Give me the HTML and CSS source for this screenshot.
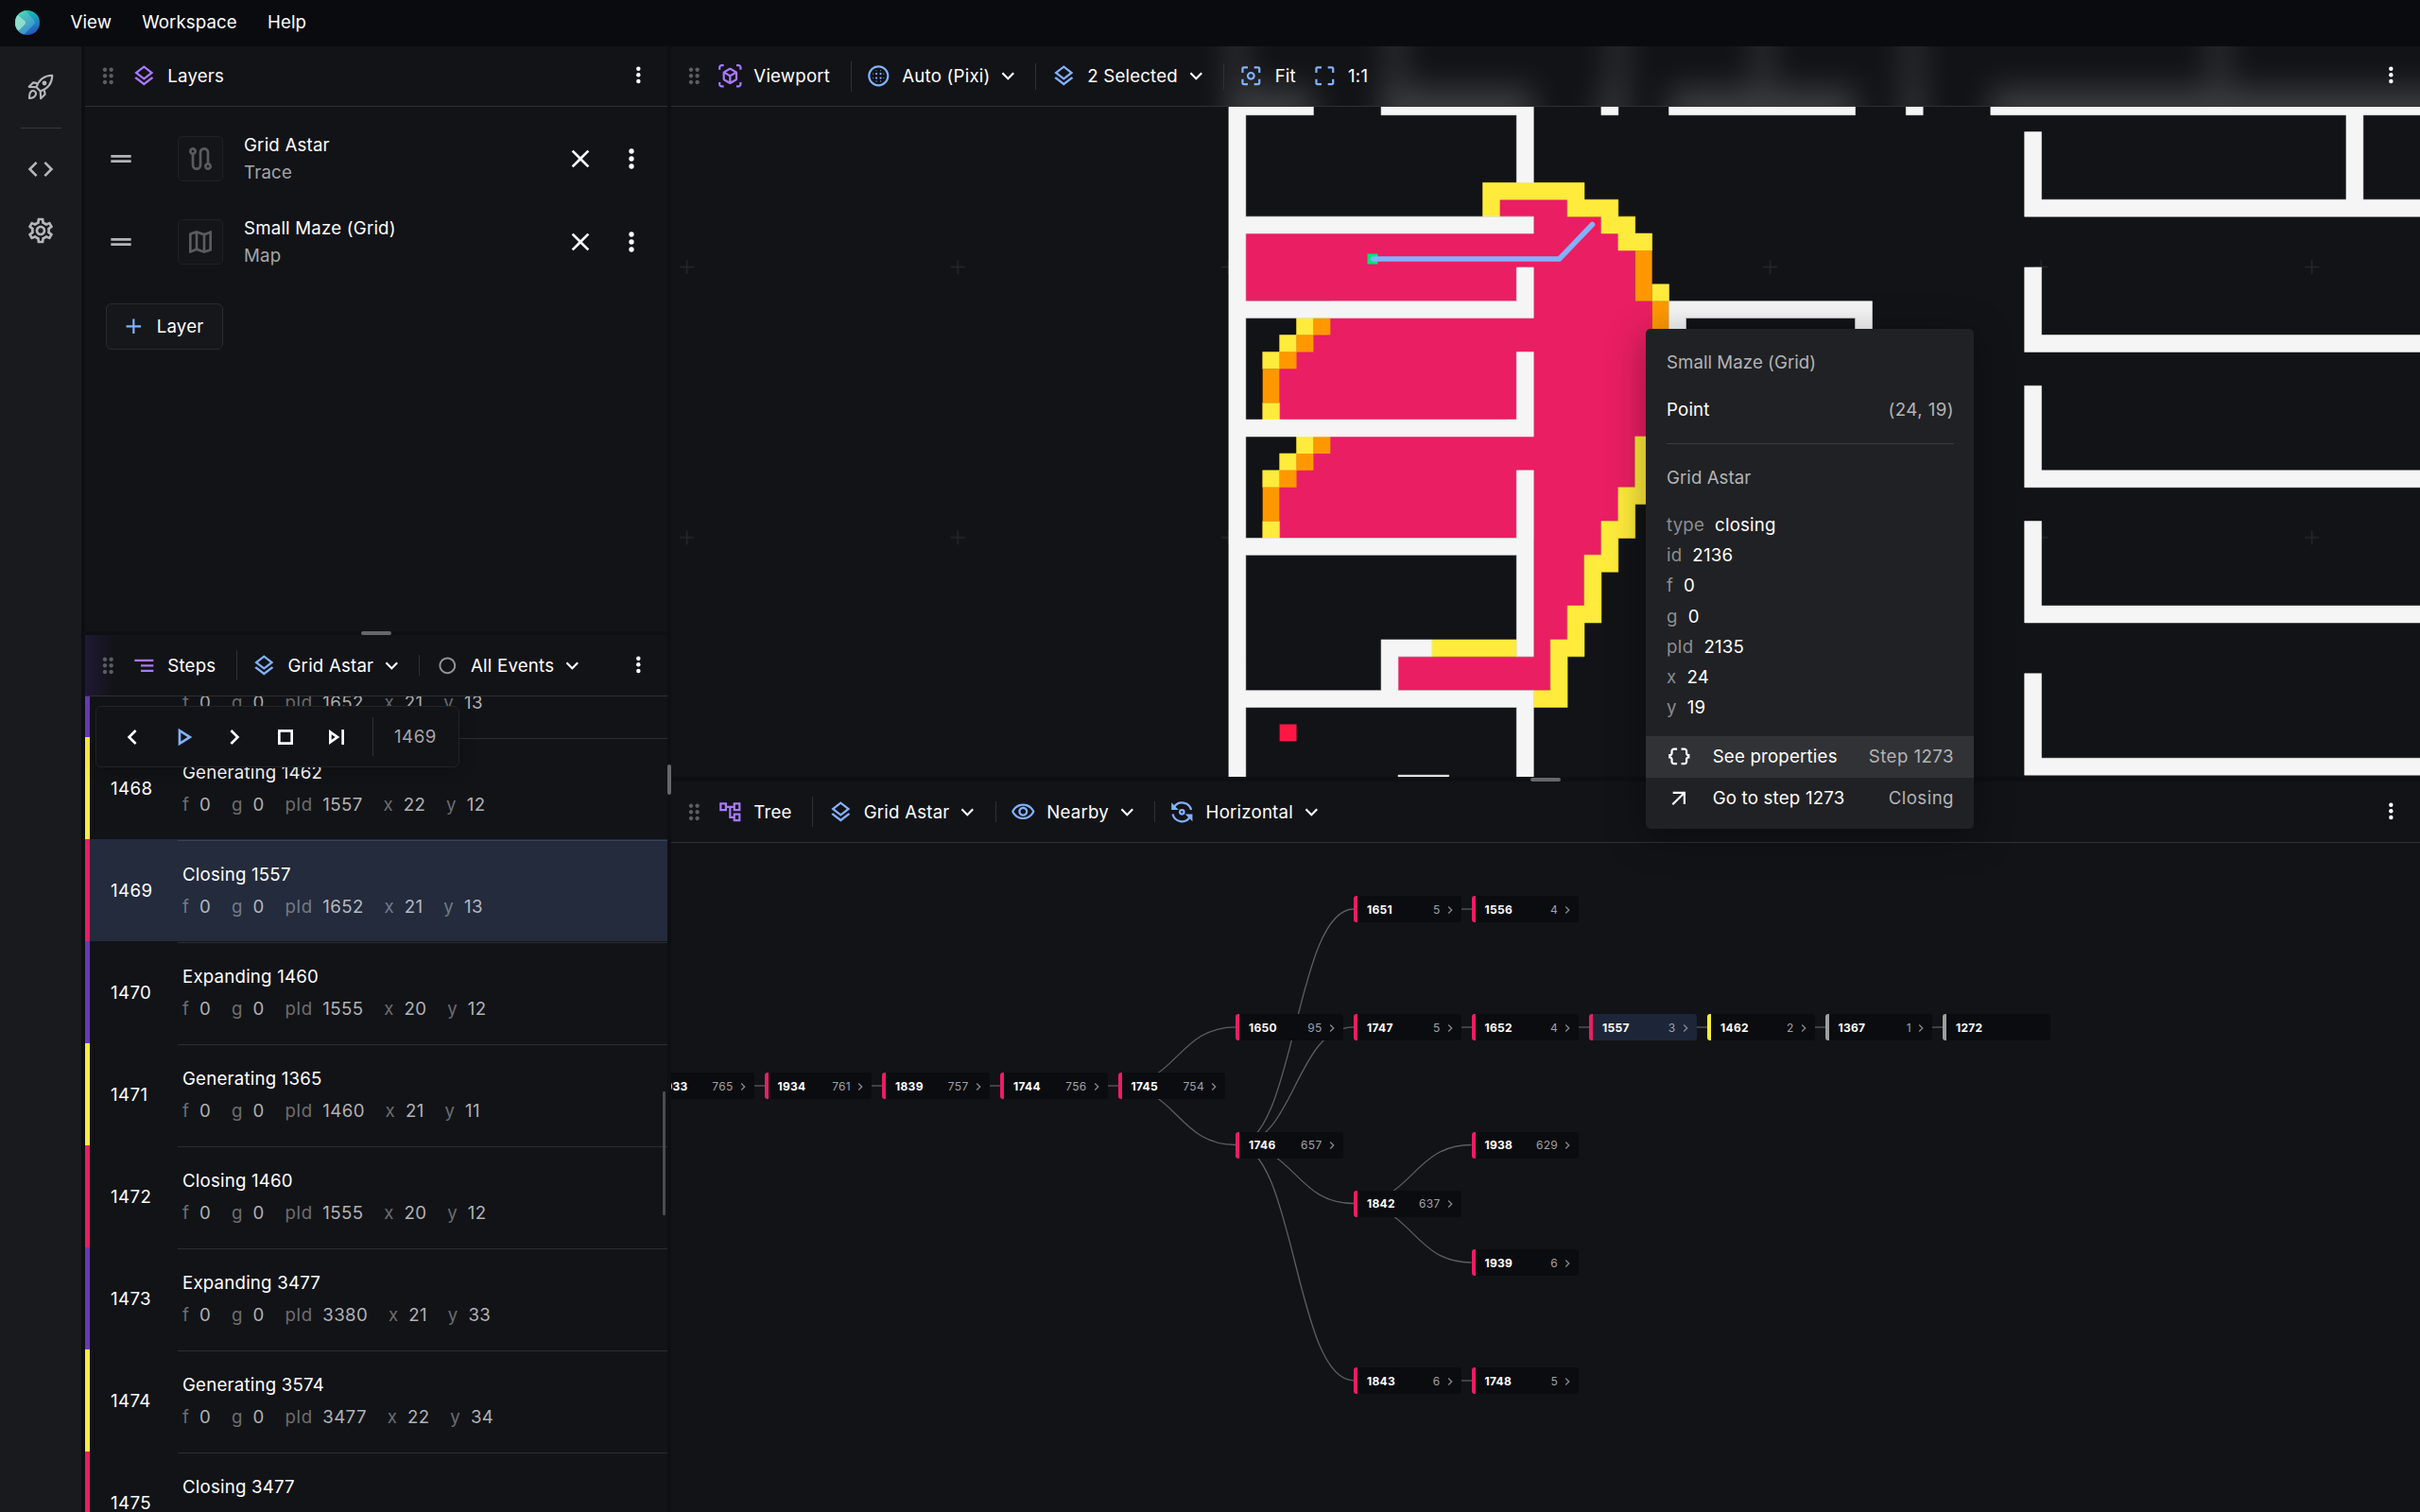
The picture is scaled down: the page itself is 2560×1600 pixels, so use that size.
FILE: index.html
```html
<!DOCTYPE html>
<html lang="en">
<head>
<meta charset="utf-8">
<title>Visualiser</title>
<link rel="stylesheet" href="styles.css">
</head>
<body>
<svg class="defs" width="0" height="0" aria-hidden="true">
  <symbol id="i-drag" viewBox="0 0 24 24"><path d="M11 18c0 1.100-.9 2-2 2s-2-.9-2-2 .9-2 2-2 2 .9 2 2m-2-8c-1.100 0-2 .9-2 2s.9 2 2 2 2-.9 2-2-.9-2-2-2m0-6c-1.100 0-2 .9-2 2s.9 2 2 2 2-.9 2-2-.9-2-2-2m6 4c1.100 0 2-.9 2-2s-.9-2-2-2-2 .9-2 2 .9 2 2 2m0 2c-1.100 0-2 .9-2 2s.9 2 2 2 2-.9 2-2-.9-2-2-2m0 6c-1.100 0-2 .9-2 2s.9 2 2 2 2-.9 2-2-.9-2-2-2"/></symbol>
  <symbol id="i-more" viewBox="0 0 24 24"><circle cx="12" cy="6" r="2"/><circle cx="12" cy="12" r="2"/><circle cx="12" cy="18" r="2"/></symbol>
  <symbol id="i-layers" viewBox="0 0 24 24"><path d="m11.990 18.540-7.370-5.730L3 14.070l9 7 9-7-1.630-1.270zM12 16l7.360-5.730L21 9l-9-7-9 7 1.630 1.270zm0-11.470L17.740 9 12 13.470 6.260 9z"/></symbol>
  <symbol id="i-handle" viewBox="0 0 24 24"><path d="M20 9H4v2h16zM4 15h16v-2H4z"/></symbol>
  <symbol id="i-route" viewBox="0 0 24 24"><path d="M19 15.180V7c0-2.210-1.790-4-4-4s-4 1.790-4 4v10c0 1.100-.9 2-2 2s-2-.9-2-2V8.820C8.160 8.400 9 7.300 9 6c0-1.660-1.340-3-3-3S3 4.340 3 6c0 1.300.84 2.400 2 2.820V17c0 2.210 1.790 4 4 4s4-1.790 4-4V7c0-1.100.9-2 2-2s2 .9 2 2v8.180c-1.160.41-2 1.510-2 2.820 0 1.660 1.340 3 3 3s3-1.340 3-3c0-1.300-.84-2.400-2-2.820M6 7c-.55 0-1-.45-1-1s.45-1 1-1 1 .45 1 1-.45 1-1 1m12 12c-.55 0-1-.45-1-1s.45-1 1-1 1 .45 1 1-.45 1-1 1"/></symbol>
  <symbol id="i-map" viewBox="0 0 24 24"><path d="m20.500 3-.16.030L15 5.100 9 3 3.360 4.900c-.21.070-.36.250-.36.480V20.500c0 .28.220.5.500.5l.16-.030L9 18.900l6 2.100 5.640-1.900c.21-.070.360-.25.360-.48V3.500c0-.28-.22-.5-.5-.5M10 5.470l4 1.400v11.660l-4-1.400zm-5 .99 3-1.010v11.700l-3 1.160zm14 11.080-3 1.010V6.860l3-1.160z"/></symbol>
  <symbol id="i-close" viewBox="0 0 24 24"><path d="M19 6.410 17.590 5 12 10.590 6.410 5 5 6.410 10.590 12 5 17.590 6.410 19 12 13.410 17.590 19 19 17.590 13.410 12z"/></symbol>
  <symbol id="i-plus" viewBox="0 0 24 24"><path d="M19 13h-6v6h-2v-6H5v-2h6V5h2v6h6z"/></symbol>
  <symbol id="i-steps" viewBox="0 0 24 24"><path d="M9 18h12v-2H9zM3 6v2h18V6zm6 7h12v-2H9z"/></symbol>
  <symbol id="i-down" viewBox="0 0 24 24"><path d="M7.410 8.590 12 13.170l4.590-4.580L18 10l-6 6-6-6z"/></symbol>
  <symbol id="i-circle" viewBox="0 0 24 24"><path d="M12 4C7.580 4 4 7.580 4 12s3.580 8 8 8 8-3.580 8-8-3.580-8-8-8m0 14.200c-3.430 0-6.200-2.770-6.200-6.200s2.770-6.200 6.200-6.200 6.200 2.770 6.200 6.200-2.770 6.200-6.200 6.200"/></symbol>
  <symbol id="i-prev" viewBox="0 0 24 24"><path d="M15.410 7.410 14 6l-6 6 6 6 1.410-1.410L10.830 12z"/></symbol>
  <symbol id="i-next" viewBox="0 0 24 24"><path d="M10 6 8.590 7.410 13.170 12l-4.580 4.590L10 18l6-6z"/></symbol>
  <symbol id="i-play" viewBox="0 0 24 24"><path d="M10 8.640 15.270 12 10 15.360zM8 5v14l11-7z"/></symbol>
  <symbol id="i-stop" viewBox="0 0 24 24"><path d="M16 8v8H8V8zm2-2H6v12h12z"/></symbol>
  <symbol id="i-skip" viewBox="0 0 24 24"><path d="m6 18 8.500-6L6 6zm2-8.140L11.030 12 8 14.140zM16 6h2v12h-2z"/></symbol>
  <symbol id="i-view" viewBox="0 0 24 24"><path d="M3 4c0-.55.45-1 1-1h2V1H4C2.340 1 1 2.340 1 4v2h2zm0 16v-2H1v2c0 1.660 1.340 3 3 3h2v-2H4c-.55 0-1-.45-1-1M20 1h-2v2h2c.55 0 1 .45 1 1v2h2V4c0-1.660-1.340-3-3-3m1 19c0 .55-.45 1-1 1h-2v2h2c1.660 0 3-1.340 3-3v-2h-2zm-2-5.130V9.130c0-.72-.38-1.380-1-1.730l-5-2.880c-.31-.18-.65-.27-1-.27s-.69.090-1 .27L6 7.390c-.62.360-1 1.020-1 1.740v5.740c0 .72.380 1.380 1 1.730l5 2.880c.31.180.65.270 1 .27s.69-.090 1-.27l5-2.880c.62-.35 1-1.010 1-1.730m-8 2.300-4-2.300v-4.630l4 2.330zm1-6.330L8.040 8.530 12 6.250l3.960 2.280zm5 4.030-4 2.300v-4.600l4-2.330z"/></symbol>
  <symbol id="i-blur" viewBox="0 0 24 24"><path d="M12 2C6.480 2 2 6.480 2 12s4.480 10 10 10 10-4.480 10-10S17.520 2 12 2m0 18c-4.420 0-8-3.580-8-8s3.580-8 8-8 8 3.580 8 8-3.580 8-8 8"/><circle cx="10" cy="10" r="1"/><circle cx="14" cy="10" r="1"/><circle cx="10" cy="14" r="1"/><circle cx="14" cy="14" r="1"/><circle cx="7" cy="10" r=".5"/><circle cx="7" cy="14" r=".5"/><circle cx="17" cy="10" r=".5"/><circle cx="17" cy="14" r=".5"/><circle cx="10" cy="7" r=".5"/><circle cx="14" cy="7" r=".5"/><circle cx="10" cy="17" r=".5"/><circle cx="14" cy="17" r=".5"/></symbol>
  <symbol id="i-fit" viewBox="0 0 24 24"><path d="M12 8c-2.210 0-4 1.790-4 4s1.790 4 4 4 4-1.790 4-4-1.790-4-4-4m0 6c-1.100 0-2-.9-2-2s.9-2 2-2 2 .9 2 2-.9 2-2 2m-7 1H3v4c0 1.100.9 2 2 2h4v-2H5zM5 5h4V3H5c-1.100 0-2 .9-2 2v4h2zm14-2h-4v2h4v4h2V5c0-1.100-.9-2-2-2m0 16h-4v2h4c1.100 0 2-.9 2-2v-4h-2z"/></symbol>
  <symbol id="i-full" viewBox="0 0 24 24"><path d="M3 5v4h2V5h4V3H5c-1.100 0-2 .9-2 2m2 10H3v4c0 1.100.9 2 2 2h4v-2H5zm14 4h-4v2h4c1.100 0 2-.9 2-2v-4h-2zm0-16h-4v2h4v4h2V5c0-1.100-.9-2-2-2"/></symbol>
  <symbol id="i-tree" viewBox="0 0 24 24"><path d="M22 11V3h-7v3H9V3H2v8h7V8h2v10h4v3h7v-8h-7v3h-2V8h2v3zM7 9H4V5h3zm10 6h3v4h-3zm0-10h3v4h-3z"/></symbol>
  <symbol id="i-eye" viewBox="0 0 24 24"><path d="M12 6c3.790 0 7.170 2.130 8.820 5.500C19.170 14.870 15.790 17 12 17s-7.170-2.130-8.820-5.500C4.830 8.130 8.210 6 12 6m0-2C7 4 2.730 7.110 1 11.500 2.730 15.890 7 19 12 19s9.270-3.110 11-7.500C21.270 7.110 17 4 12 4m0 5c1.380 0 2.500 1.120 2.500 2.500S13.380 14 12 14s-2.500-1.120-2.500-2.500S10.620 9 12 9m0-2c-2.480 0-4.500 2.020-4.500 4.500S9.520 16 12 16s4.500-2.020 4.500-4.500S14.480 7 12 7"/></symbol>
  <symbol id="i-rotate" viewBox="0 0 24 24"><g fill="none" stroke="currentColor" stroke-width="2"><path d="M20.800 10A9 9 0 0 0 4.600 7M3.200 14a9 9 0 0 0 16.200 3"/><circle cx="12" cy="12" r="2"/></g><path d="M2 3v7h7L6.500 7.600 4 5zM22 21v-7h-7l2.500 2.400L20 19z"/></symbol>
  <symbol id="i-rocket" viewBox="0 0 24 24"><g fill="none" stroke="currentColor" stroke-width="1.600" stroke-linejoin="round"><path d="M8.600 12.200C10.500 6.500 14.500 3 21.200 2.800 21 9.500 17.500 13.500 11.800 15.400z"/><path d="M9.400 9.100 6.200 8.500 2.800 11.900l5.800.3M14.900 14.600l.6 3.200-3.400 3.400-.3-5.800"/><path d="M3 21c0-2.600.3-4.300 1.300-5.300a2.300 2.300 0 0 1 3.300 0 2.300 2.300 0 0 1 0 3.300C6.600 20.700 5.600 21 3 21z"/></g><circle cx="15" cy="9" r="1.800"/></symbol>
  <symbol id="i-code" viewBox="0 0 24 24"><path d="M9.400 16.600 4.800 12l4.600-4.600L8 6l-6 6 6 6zm5.200 0 4.600-4.600-4.600-4.600L16 6l6 6-6 6z"/></symbol>
  <symbol id="i-gear" viewBox="0 0 24 24"><path d="M19.430 12.980c.04-.32.070-.64.070-.98s-.03-.66-.07-.98l2.110-1.650c.19-.15.240-.42.120-.64l-2-3.460c-.09-.16-.26-.25-.44-.25-.06 0-.12.010-.17.030l-2.490 1c-.52-.4-1.080-.73-1.690-.98l-.38-2.650C14.460 2.180 14.250 2 14 2h-4c-.25 0-.46.180-.49.420l-.38 2.650c-.61.250-1.170.590-1.690.98l-2.490-1c-.06-.02-.12-.03-.18-.03-.17 0-.34.090-.43.250l-2 3.460c-.13.220-.07.490.12.640l2.110 1.650c-.04.320-.07.650-.07.980s.03.660.07.980l-2.110 1.650c-.19.150-.24.420-.12.640l2 3.460c.09.160.26.250.44.250.06 0 .12-.01.170-.03l2.490-1c.52.400 1.080.730 1.690.98l.38 2.650c.03.240.24.420.49.420h4c.25 0 .46-.18.490-.42l.38-2.650c.61-.25 1.170-.59 1.690-.98l2.490 1c.06.020.12.030.18.030.17 0 .34-.09.430-.25l2-3.460c.12-.22.070-.49-.12-.64zm-1.980-1.710c.04.310.05.520.05.730s-.02.430-.05.730l-.14 1.130.89.700 1.080.84-.7 1.210-1.270-.51-1.040-.42-.9.680c-.43.320-.84.560-1.250.730l-1.060.43-.16 1.130-.2 1.350h-1.400l-.19-1.350-.16-1.130-1.060-.43c-.43-.18-.83-.41-1.230-.71l-.91-.7-1.060.43-1.270.51-.7-1.210 1.080-.84.890-.7-.14-1.130c-.03-.31-.05-.54-.05-.74s.02-.43.050-.73l.14-1.130-.89-.7-1.080-.84.700-1.210 1.270.51 1.040.42.900-.68c.43-.32.840-.56 1.250-.73l1.060-.43.160-1.130.2-1.350h1.390l.19 1.350.16 1.130 1.060.43c.43.180.83.410 1.230.71l.91.700 1.060-.43 1.270-.51.700 1.210-1.070.850-.89.700zM12 8c-2.210 0-4 1.790-4 4s1.790 4 4 4 4-1.790 4-4-1.790-4-4-4m0 6c-1.100 0-2-.9-2-2s.9-2 2-2 2 .9 2 2-.9 2-2 2"/></symbol>
  <symbol id="i-braces" viewBox="0 0 24 24"><path d="M4 7v2c0 .55-.45 1-1 1H2v4h1c.55 0 1 .45 1 1v2c0 1.650 1.350 3 3 3h3v-2H7c-.55 0-1-.45-1-1v-2c0-1.300-.84-2.420-2-2.830v-.34C5.160 11.420 6 10.300 6 9V7c0-.55.45-1 1-1h3V4H7C5.350 4 4 5.350 4 7M21 10c-.55 0-1-.45-1-1V7c0-1.650-1.350-3-3-3h-3v2h3c.55 0 1 .45 1 1v2c0 1.300.84 2.420 2 2.830v.34c-1.160.41-2 1.520-2 2.830v2c0 .55-.45 1-1 1h-3v2h3c1.650 0 3-1.350 3-3v-2c0-.55.45-1 1-1h1v-4z"/></symbol>
  <symbol id="i-out" viewBox="0 0 24 24"><path d="M6 6v2h8.590L5 17.590 6.410 19 16 9.410V18h2V6z"/></symbol>
</svg>

<div class="app">
  <header class="menubar">
    <svg class="logo" viewBox="0 0 26 26"><defs><linearGradient id="lg" x1="0.300" y1="0" x2="0.700" y2="1"><stop offset="0" stop-color="#1fc8a4"/><stop offset=".5" stop-color="#1398c8"/><stop offset="1" stop-color="#2a50b8"/></linearGradient><linearGradient id="lm" x1="0" y1="0" x2="0.500" y2="1"><stop offset="0" stop-color="#52dcb0"/><stop offset="1" stop-color="#3f8fd0"/></linearGradient><clipPath id="lc"><circle cx="13" cy="13" r="13"/></clipPath></defs><g clip-path="url(#lc)"><path fill="url(#lg)" d="M0 0h26v26H0z"/><path fill="url(#lm)" d="M0 0h11l9 10.500q1.500 2 0 4L9 26H0z"/><path fill="#8fdccb" d="M0 4l3 1 7.500 6.500q1.200 1.500 0 3L3 22l-3 2z"/></g></svg>
    <nav class="menu"><span>View</span><span>Workspace</span><span>Help</span></nav>
  </header>
  <div class="main">
    <aside class="sidebar">
      <svg class="ic lg"><use href="#i-rocket"/></svg>
      <hr>
      <svg class="ic lg"><use href="#i-code"/></svg>
      <svg class="ic lg gear"><use href="#i-gear"/></svg>
    </aside>

    <div class="left">
      <section class="panel layers">
        <div class="bar">
          <svg class="ic drag"><use href="#i-drag"/></svg>
          <div class="tool title"><svg class="ic purple"><use href="#i-layers"/></svg><span>Layers</span></div>
          <svg class="ic more"><use href="#i-more"/></svg>
        </div>
        <div class="layer-list">
          <div class="layer">
            <svg class="ic xl muted"><use href="#i-handle"/></svg>
            <div class="tile"><svg class="ic xl"><use href="#i-route"/></svg></div>
            <div class="layer-text"><span>Grid Astar</span><span class="sub">Trace</span></div>
            <svg class="ic xl"><use href="#i-close"/></svg>
            <svg class="ic xl last"><use href="#i-more"/></svg>
          </div>
          <div class="layer">
            <svg class="ic xl muted"><use href="#i-handle"/></svg>
            <div class="tile"><svg class="ic xl"><use href="#i-map"/></svg></div>
            <div class="layer-text"><span>Small Maze (Grid)</span><span class="sub">Map</span></div>
            <svg class="ic xl"><use href="#i-close"/></svg>
            <svg class="ic xl last"><use href="#i-more"/></svg>
          </div>
          <div class="add"><svg class="ic blue"><use href="#i-plus"/></svg><span>Layer</span></div>
        </div>
      </section>
      <div class="split-h"><i></i></div>
      <section class="panel steps">
        <div class="bar glow">
          <svg class="ic drag"><use href="#i-drag"/></svg>
          <div class="tool title"><svg class="ic purple"><use href="#i-steps"/></svg><span>Steps</span></div>
          <i class="div tall"></i>
          <div class="tool"><svg class="ic blue"><use href="#i-layers"/></svg><span>Grid Astar</span><svg class="ic"><use href="#i-down"/></svg></div>
          <i class="div"></i>
          <div class="tool"><svg class="ic gray"><use href="#i-circle"/></svg><span>All Events</span><svg class="ic"><use href="#i-down"/></svg></div>
          <svg class="ic more"><use href="#i-more"/></svg>
        </div>
        <div class="step-view">
          <div class="step-list">
            <div class="step first expanding"><b></b><div><p><i>f</i>0<i>g</i>0<i>pId</i>1652<i>x</i>21<i>y</i>13</p></div></div>
            <div class="step generating"><b>1468</b><div><span>Generating 1462</span><p><i>f</i>0<i>g</i>0<i>pId</i>1557<i>x</i>22<i>y</i>12</p></div></div>
            <div class="step closing selected"><b>1469</b><div><span>Closing 1557</span><p><i>f</i>0<i>g</i>0<i>pId</i>1652<i>x</i>21<i>y</i>13</p></div></div>
            <div class="step expanding"><b>1470</b><div><span>Expanding 1460</span><p><i>f</i>0<i>g</i>0<i>pId</i>1555<i>x</i>20<i>y</i>12</p></div></div>
            <div class="step generating"><b>1471</b><div><span>Generating 1365</span><p><i>f</i>0<i>g</i>0<i>pId</i>1460<i>x</i>21<i>y</i>11</p></div></div>
            <div class="step closing"><b>1472</b><div><span>Closing 1460</span><p><i>f</i>0<i>g</i>0<i>pId</i>1555<i>x</i>20<i>y</i>12</p></div></div>
            <div class="step expanding"><b>1473</b><div><span>Expanding 3477</span><p><i>f</i>0<i>g</i>0<i>pId</i>3380<i>x</i>21<i>y</i>33</p></div></div>
            <div class="step generating"><b>1474</b><div><span>Generating 3574</span><p><i>f</i>0<i>g</i>0<i>pId</i>3477<i>x</i>22<i>y</i>34</p></div></div>
            <div class="step closing"><b>1475</b><div><span>Closing 3477</span></div></div>
          </div>
          <div class="player">
            <svg class="ic xl"><use href="#i-prev"/></svg>
            <svg class="ic xl blue"><use href="#i-play"/></svg>
            <svg class="ic xl"><use href="#i-next"/></svg>
            <svg class="ic xl"><use href="#i-stop"/></svg>
            <svg class="ic xl"><use href="#i-skip"/></svg>
            <span>1469</span>
          </div>
          <div class="scrollbar"></div>
        </div>
      </section>
    </div>

    <div class="split-v"><i></i></div>

    <div class="right">
      <section class="panel viewport">
        <div class="bar">
          <svg class="haze" viewBox="710 49 1850 63"><g fill="#f5f5f5">
            <path fill-opacity=".85" d="M1299 0h18v200h-18zM1467 0h18v200h-18zM1702 0h18v200h-18zM1856 0h18v200h-18zM2014 0h18v200h-18zM2338 0h18v200h-18z"/>
            <path d="M1299 93h91v90h-91zM1461 93h161v90h-161zM1693 93h19v90h-19zM1766 93h197v90h-197zM2016 93h19v90h-19zM2106 93h500v90h-500z"/></g></svg>
          <svg class="ic drag"><use href="#i-drag"/></svg>
          <div class="tool title"><svg class="ic purple"><use href="#i-view"/></svg><span>Viewport</span></div>
          <i class="div tall"></i>
          <div class="tool"><svg class="ic blue"><use href="#i-blur"/></svg><span>Auto (Pixi)</span><svg class="ic"><use href="#i-down"/></svg></div>
          <i class="div mid"></i>
          <div class="tool"><svg class="ic blue"><use href="#i-layers"/></svg><span>2 Selected</span><svg class="ic"><use href="#i-down"/></svg></div>
          <i class="div mid"></i>
          <div class="tool fit"><svg class="ic blue"><use href="#i-fit"/></svg><span>Fit</span></div>
          <div class="tool"><svg class="ic blue"><use href="#i-full"/></svg><span>1:1</span></div>
          <svg class="ic more"><use href="#i-more"/></svg>
        </div>
        <svg class="map" viewBox="710 113 1850 709">
          <defs><pattern id="cross" x="583.400" y="139.400" width="286.500" height="286.300" patternUnits="userSpaceOnUse"><path d="M135.750 143.200h15M143.250 135.700v15" stroke="#26272b" stroke-width="1.400"/></pattern></defs>
          <rect x="710" y="113" width="1850" height="709" fill="url(#cross)"/>
          <g transform="translate(1299.900 139.600) scale(17.910)">
            <path fill="#e91e63" d="M1 6h17V4h2v1h2v1h1v1h1v3h1v8h-1v3h-1v2h-1v2h-1v3h-1v2h-1v3h-9v-2h8v-7H3v-4h1v-1h1v-1h1v-1H3v-4h1v-1h1v-1h1v-1H1zM16 4h4v1h-4z"/>
            <g fill="#ffeb3b" stroke="#ffeb3b" stroke-width=".03">
              <path d="M15 3h6v1h2v1h1v1h1v1h-2V6h-1V5h-2V4h-4v1h-1zM25 9h1v1h-1z"/>
              <path d="M4 11h1v1H4zM3 12h1v1H3zM2 13h1v1H2zM2 16h1v1H2zM4 18h1v1H4zM3 19h1v1H3zM2 20h1v1H2zM2 23h1v1H2z"/>
              <path d="M24 18h1v4h-1v2h-1v2h-1v3h-1v2h-1v3h-2v-1h1v-3h1v-2h1v-3h1v-2h1v-2h1zM12 30h5v1h-5z"/>
            </g>
            <path fill="#ff9800" d="M24 7h1v3h-1zM25 10h1v2h-1zM5 11h1v1H5zM4 12h1v1H4zM3 13h1v1H3zM2 14h1v2H2zM5 18h1v1H5zM4 19h1v1H4zM3 20h1v1H3zM2 21h1v2H2z"/>
            <g fill="#f5f5f5" stroke="#f5f5f5" stroke-width=".03">
              <path d="M0-2h5v1H1v6h17v1H1v4h16V8h1v3H1v6h16v-4h1v5H1v6h16v-4h1v11h-1v-6H1v8h8v-3h3v1h-2v2h8v6h-1v-5H1v5H0z"/>
              <path d="M9-2h9v5h-1v-4H9zM22-2h1v1h-1zM26-2h11v1H26zM40-2h1v1h-1zM45-2h30v1h-8v5h8v1H47V0h1v4h18v-5H45z"/>
              <path d="M26 10h12v2h-1v-1H27v1h-1zM47 8h1v4h27v1H47zM47 15h1v5h27v1H47zM47 23h1v5h27v1H47zM47 32h1v5h27v1H47zM10 38h3v1h-3z"/>
            </g>
            <path fill="#ff1744" d="M3 35h1v1H3z"/>
          </g>
          <path fill="#00e676" d="M1446.500 268.500h11v11h-11z"/><path fill="#ff1744" d="M1679.500 232.500h11v11h-11z"/>
          <path d="M1452.500 274h197l35-36.500" fill="none" stroke="#82b1ff" stroke-width="5.500" stroke-linecap="round" stroke-linejoin="round"/>
        </svg>
      </section>
      <div class="split-h wide"><i></i></div>
      <section class="panel tree">
        <div class="bar">
          <svg class="ic drag"><use href="#i-drag"/></svg>
          <div class="tool title"><svg class="ic purple"><use href="#i-tree"/></svg><span>Tree</span></div>
          <i class="div tall"></i>
          <div class="tool"><svg class="ic blue"><use href="#i-layers"/></svg><span>Grid Astar</span><svg class="ic"><use href="#i-down"/></svg></div>
          <i class="div"></i>
          <div class="tool"><svg class="ic blue"><use href="#i-eye"/></svg><span>Nearby</span><svg class="ic"><use href="#i-down"/></svg></div>
          <i class="div"></i>
          <div class="tool"><svg class="ic blue"><use href="#i-rotate"/></svg><span>Horizontal</span><svg class="ic"><use href="#i-down"/></svg></div>
          <svg class="ic more"><use href="#i-more"/></svg>
        </div>
        <div class="graph">
          <svg class="edges" viewBox="710 892 1850 708"><g fill="none" stroke="#5d5e61" stroke-width="1.300">
            <path d="M1182.500 1149C1245 1149 1245 1086.800 1307.500 1086.800M1182.500 1149C1245 1149 1245 1211.500 1307.500 1211.500"/>
            <path d="M1307.500 1211.500C1370 1211.500 1370 962 1432 962M1307.500 1211.500C1370 1211.500 1370 1086.800 1432 1086.800M1307.500 1211.500C1370 1211.500 1370 1273.500 1432 1273.500M1307.500 1211.500C1370 1211.500 1370 1460.800 1432 1460.800"/>
            <path d="M1432 1273.500C1494 1273.500 1494 1211.500 1556.500 1211.500M1432 1273.500C1494 1273.500 1494 1336 1556.500 1336"/></g>
            <path d="M710 1149h473M1432 962h125M1432 1087h624M1432 1461h125" stroke="#404144" stroke-width="2"/></svg>
          <div class="node" style="left:-26px;top:243px"><b>1933</b><span>765</span><svg><use href="#i-next"/></svg></div>
          <div class="node" style="left:98.500px;top:243px"><b>1934</b><span>761</span><svg><use href="#i-next"/></svg></div>
          <div class="node" style="left:223px;top:243px"><b>1839</b><span>757</span><svg><use href="#i-next"/></svg></div>
          <div class="node" style="left:348px;top:243px"><b>1744</b><span>756</span><svg><use href="#i-next"/></svg></div>
          <div class="node" style="left:472.500px;top:243px"><b>1745</b><span>754</span><svg><use href="#i-next"/></svg></div>
          <div class="node" style="left:597px;top:181px"><b>1650</b><span>95</span><svg><use href="#i-next"/></svg></div>
          <div class="node" style="left:597px;top:305.500px"><b>1746</b><span>657</span><svg><use href="#i-next"/></svg></div>
          <div class="node" style="left:722px;top:56px"><b>1651</b><span>5</span><svg><use href="#i-next"/></svg></div>
          <div class="node" style="left:846.500px;top:56px"><b>1556</b><span>4</span><svg><use href="#i-next"/></svg></div>
          <div class="node" style="left:722px;top:181px"><b>1747</b><span>5</span><svg><use href="#i-next"/></svg></div>
          <div class="node" style="left:846.500px;top:181px"><b>1652</b><span>4</span><svg><use href="#i-next"/></svg></div>
          <div class="node current" style="left:971px;top:181px"><b>1557</b><span>3</span><svg><use href="#i-next"/></svg></div>
          <div class="node yellow" style="left:1096px;top:181px"><b>1462</b><span>2</span><svg><use href="#i-next"/></svg></div>
          <div class="node idle" style="left:1220.500px;top:181px"><b>1367</b><span>1</span><svg><use href="#i-next"/></svg></div>
          <div class="node idle" style="left:1345px;top:181px"><b>1272</b></div>
          <div class="node" style="left:722px;top:367.500px"><b>1842</b><span>637</span><svg><use href="#i-next"/></svg></div>
          <div class="node" style="left:846.500px;top:305.500px"><b>1938</b><span>629</span><svg><use href="#i-next"/></svg></div>
          <div class="node" style="left:846.500px;top:430px"><b>1939</b><span>6</span><svg><use href="#i-next"/></svg></div>
          <div class="node" style="left:722px;top:555px"><b>1843</b><span>6</span><svg><use href="#i-next"/></svg></div>
          <div class="node" style="left:846.500px;top:555px"><b>1748</b><span>5</span><svg><use href="#i-next"/></svg></div>
        </div>
      </section>
    </div>
  </div>

  <div class="popup">
    <div class="head">Small Maze (Grid)</div>
    <div class="point"><span>Point</span><em>(24, 19)</em></div>
    <hr>
    <div class="head second">Grid Astar</div>
    <dl>
      <div><dt>type</dt><dd>closing</dd></div>
      <div><dt>id</dt><dd>2136</dd></div>
      <div><dt>f</dt><dd>0</dd></div>
      <div><dt>g</dt><dd>0</dd></div>
      <div><dt>pId</dt><dd>2135</dd></div>
      <div><dt>x</dt><dd>24</dd></div>
      <div><dt>y</dt><dd>19</dd></div>
    </dl>
    <div class="action hover"><svg class="ic"><use href="#i-braces"/></svg><span>See properties</span><em>Step 1273</em></div>
    <div class="action"><svg class="ic"><use href="#i-out"/></svg><span>Go to step 1273</span><em>Closing</em></div>
  </div>
</div>
</body>
</html>
```
FILE: styles.css
```css
* { box-sizing: border-box; }
body {
  margin: 0;
  background: #0e0f13;
  color: #fff;
  font-family: Inter, "Liberation Sans", sans-serif;
  font-size: 18.67px;
  line-height: 26px;
  letter-spacing: .2px;
  overflow: hidden;
}
i, em { font-style: normal; }
hr { border: 0; height: 1px; background: #36373b; margin: 0; }
.defs { position: absolute; }

.app { width: 2560px; height: 1600px; display: flex; flex-direction: column; }
.menubar { height: 49px; background: #0a0b0f; display: flex; align-items: center; padding: 0 16px 1px; }
.logo { width: 26px; height: 26px; }
.menu { display: flex; gap: 32.200px; margin-left: 32.500px; letter-spacing: .1px; }
.main { flex: 1; min-height: 0; display: flex; }

.ic { width: 26.67px; height: 26.67px; flex: none; fill: currentColor; display: block; }
.ic.xl { width: 32px; height: 32px; }
.ic.lg { width: 32px; height: 32px; }
.purple { color: #a879ff; }
.blue { color: #82b1ff; }
.gray { color: #919294; }
.muted { color: #b3b4b6; }

.sidebar { width: 86px; margin-right: 4px; background: #191a1e; color: #b5b6b8; display: flex; flex-direction: column; align-items: center; padding-top: 27px; }
.sidebar hr { width: 43px; margin: 27px 0; }
.sidebar .gear { margin-top: 33px; }

.left { width: 616px; display: flex; flex-direction: column; }
.right { flex: 1; min-width: 0; display: flex; flex-direction: column; }
.panel { background: #121317; display: flex; flex-direction: column; min-height: 0; overflow: hidden; }
.layers { height: 619px; }
.steps { flex: 1; }
.viewport { height: 773px; }
.tree { flex: 1; }

.split-h { height: 4px; display: flex; justify-content: center; }
.split-h i { width: 32px; height: 4px; border-radius: 2px; background: #66676a; }
.split-h.wide { height: 5px; padding-top: 1px; }
.split-v { width: 4px; padding-top: 760px; }
.split-v i { display: block; width: 4px; height: 32px; border-radius: 2px; background: #66676a; }

.bar { position: relative; height: 64px; flex: none; display: flex; align-items: center; padding: 0 17.300px 0 11px; border-bottom: 1px solid #2f3034; overflow: hidden; }
.steps .bar, .tree .bar { height: 65px; }
.steps .tool span, .tree .tool span { padding-top: 1px; }
.glow { background: linear-gradient(90deg, #1f1935, #121317 30px); }
.bar > * { position: relative; }
.drag { color: #5c5d60; margin-right: 11.500px; }
.bar .more { margin-left: auto; top: -1px; }
.tool { display: flex; align-items: center; }
.tool span { margin: 0 5.700px 0 11.500px; white-space: nowrap; }
.tool.title span { margin-right: 21.400px; }
.tool.fit span { margin-right: 17px; }
.div { width: 1px; height: 22px; background: #303135; margin: 0 15.600px; }
.div.mid { height: 28px; }
.div.tall { height: 32px; margin-left: 0; }
.haze { width: 1850px; height: 63px; opacity: .18; filter: blur(16px); overflow: visible; }
.viewport .bar > .haze { position: absolute; inset: 0; }

.layer-list { padding: 11px 22px 0; }
.layer { height: 88px; display: flex; align-items: center; }
.tile { width: 48px; height: 48px; margin: 0 22px 0 44px; border: 1px solid #202125; border-radius: 5px; background: #141519; color: #5a5b5e; display: flex; align-items: center; justify-content: center; }
.layer-text { flex: 1; display: flex; flex-direction: column; line-height: 29px; }
.sub { color: #a5a6a8; }
.last { margin: 0 0 0 22px; }
.add { width: 124px; height: 49px; margin-top: 21px; border: 1px solid #2a2b2f; border-radius: 6px; background: #16171b; display: flex; align-items: center; gap: 11px; padding-left: 15px; }

.step-view { position: relative; flex: 1; min-height: 0; overflow: hidden; }
.step { height: 108px; display: flex; border-left: 5px solid; }
.step.first { height: 43px; }
.step.first div { margin-top: 0; border: 0; padding-top: 0; }
.step.first p { margin-top: -7px; }
.step b { width: 93px; padding-left: 22px; line-height: 110px; font-weight: 400; letter-spacing: .4px; color: #fff; }
.step div { flex: 1; margin-top: 1px; border-top: 1px solid #2c2d31; padding: 22px 0 0 5px; }
.step span { display: block; line-height: 27px; color: #fff; }
.step p { margin: 7px 0 0; line-height: 27px; color: #b0b1b3; letter-spacing: .4px; }
.step p i { color: #6c6d70; margin: 0 10.700px 0 21.800px; }
.step p i:first-child { margin-left: 0; }
.expanding { border-color: #673ab7; }
.generating { border-color: #ffeb3b; }
.closing { border-color: #e91e63; }
.selected { background: #232b3c; }
.selected div { border-color: #3a4252; }
.selected p { color: #b4b8c0; }
.selected p i { color: #747a87; }

.player { position: absolute; left: 11px; top: 10px; width: 385px; height: 65px; background: #121317; border: 1px solid #222327; border-radius: 6px; display: flex; align-items: center; gap: 22px; padding-left: 22px; box-shadow: 0 4px 16px rgba(0, 0, 0, .2); }
.player span { height: 41px; line-height: 41px; border-left: 1px solid #303135; padding-left: 22px; color: #a5a6a8; letter-spacing: .5px; }
.scrollbar { position: absolute; left: 611px; top: 418px; width: 3px; height: 131px; background: #4c4d50; border-radius: 1px; }

.map { width: 1850px; height: 709px; display: block; }

.graph { position: relative; flex: 1; overflow: hidden; }
.edges { position: absolute; left: 0; top: 0; width: 1850px; height: 708px; }
.node { position: absolute; width: 113.500px; height: 28px; border-left: 4px solid #e91e63; border-radius: 3px; background: #0b0c10; display: flex; align-items: center; padding: 1px 4px 0 10px; font-size: 12px; letter-spacing: .3px; }
.node b { flex: 1; font-weight: 700; }
.node span { color: #a0a1a3; }
.node svg { width: 16px; height: 16px; fill: #85868a; margin-left: 2px; }
.node.current { background: #1d2638; }
.node.yellow { border-color: #ffeb3b; }
.node.idle { border-color: #9e9e9e; }

.popup { position: absolute; left: 1741px; top: 348px; width: 347px; height: 529px; background: #202124; border-radius: 5px; padding-top: 21px; box-shadow: 0 8px 40px rgba(0, 0, 0, .35); display: flex; flex-direction: column; }
.popup .head { color: #b3b4b6; padding: 0 22px; height: 30px; line-height: 30px; letter-spacing: .05px; }
.popup em { color: #b3b4b6; margin-left: auto; letter-spacing: .45px; }
.point { display: flex; padding: 0 21px 0 22px; height: 50px; line-height: 70px; }
.popup hr { margin: 19.500px 21px 21px 22px; background: #3b3c40; flex: none; }
.popup dl { margin: 19.500px 0 13.500px; padding: 0 22px; }
.popup dl div { display: flex; gap: 11px; height: 32.200px; line-height: 32px; }
.popup dt { color: #8c8d90; }
.popup dd { margin: 0; }
.action { height: 44px; display: flex; align-items: center; padding: 0 21px 0 22px; }
.action span { margin-left: 22px; }
.hover { background: #313235; }
```
